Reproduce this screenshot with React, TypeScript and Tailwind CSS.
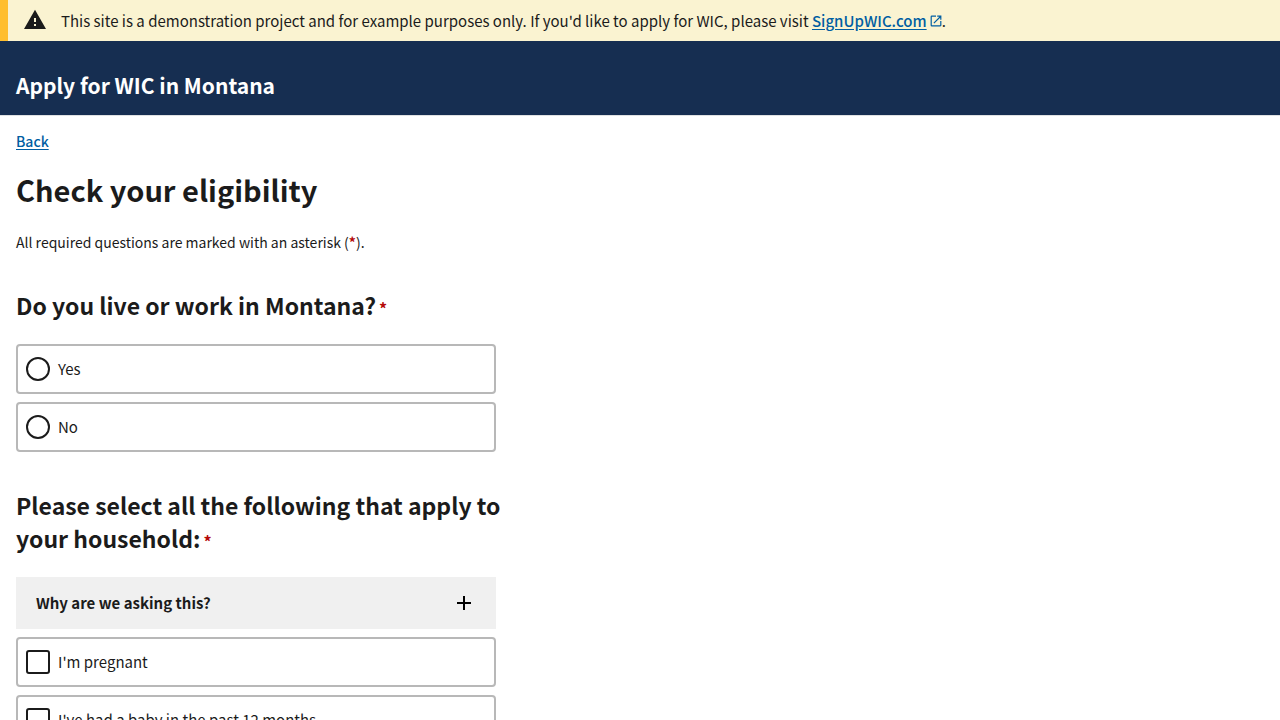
import { useState } from "react";

function Required({ className = "" }: { className?: string }) {
  return (
    <abbr title="required" className={`leading-none font-bold text-[#b50909] no-underline ${className}`}>
      *
    </abbr>
  );
}

type ChoiceProps = { type: "radio" | "checkbox"; name: string; label: string };

function Choice({ type, name, label }: ChoiceProps) {
  const shape = type === "radio" ? "rounded-full checked:bg-[#005ea2]" : "rounded-[3px] checked:bg-[#005ea2]";
  return (
    <label className="flex h-[50px] items-center gap-2 rounded border-2 border-[#b8b8b8] bg-white px-2 text-[15px] leading-5">
      <input
        type={type}
        name={name}
        className={`size-6 shrink-0 appearance-none border-2 border-[#1b1b1b] bg-white ${shape}`}
      />
      {label}
    </label>
  );
}

export default function App() {
  const [open, setOpen] = useState(false);
  return (
    <div className="bg-white font-['Noto_Sans_CJK_SC',sans-serif] text-[15px] text-[#1b1b1b]">
      <section
        aria-label="Site notice"
        className="flex items-center gap-[15px] border-l-8 border-[#ffbe2e] bg-[#faf3d1] px-4 py-2"
      >
        <svg viewBox="0 0 24 24" className="-mt-1 size-[22px] shrink-0" fill="currentColor" aria-hidden="true">
          <path d="M0 23h24L12 2 0 23zm13.1-3.3h-2.2v-2.2h2.2v2.2zm0-4.4h-2.2v-4.4h2.2v4.4z" />
        </svg>
        <p className="leading-[25px]">
          This site is a demonstration project and for example purposes only. If you'd like to apply for WIC, please
          visit{" "}
          <a href="#signup" className="font-medium text-[#005ea2] underline underline-offset-2">
            SignUpWIC.com
          </a>
          <svg viewBox="2 2 20 20" className="ml-[3px] inline size-3 align-baseline text-[#005ea2]" fill="currentColor" aria-hidden="true">
            <path d="M19 19H5V5h7V3H5a2 2 0 0 0-2 2v14a2 2 0 0 0 2 2h14c1.1 0 2-.9 2-2v-7h-2v7zM14 3v2h3.59l-9.83 9.83 1.41 1.41L19 6.41V10h2V3h-7z" />
          </svg>
          .
        </p>
      </section>
      <header className="border-b border-[#dfe1e2] bg-[#162e51] px-4 pt-8 pb-[18px] text-white">
        <p className="text-[21px] leading-6 font-bold">Apply for WIC in Montana</p>
      </header>
      <main className="px-4 pt-4 pb-8">
        <a href="#back" className="block w-fit text-sm leading-[18px] font-medium text-[#005ea2] underline underline-offset-2">
          Back
        </a>
        <h1 className="mt-5 text-[29px] leading-[38px] font-bold">Check your eligibility</h1>
        <p className="mt-6 text-sm leading-5">
          All required questions are marked with an asterisk (<Required />).
        </p>
        <form className="max-w-[480px]">
          <fieldset className="mt-[37px]">
            <legend className="-mr-2 text-[23px] leading-[33px] font-bold">
              Do you live or work in Montana?
              <Required className="ml-[3px] text-base" />
            </legend>
            <div className="mt-[22px] flex flex-col gap-2">
              <Choice type="radio" name="residency" label="Yes" />
              <Choice type="radio" name="residency" label="No" />
            </div>
          </fieldset>
          <fieldset className="mt-[37px]">
            <legend className="-mr-2 text-[23px] leading-[33px] font-bold">
              Please select all the following that apply to your household:
              <Required className="ml-[3px] text-base" />
            </legend>
            <div className="mt-[22px] flex flex-col gap-2">
              <div>
                <button
                  type="button"
                  aria-expanded={open}
                  onClick={() => setOpen(!open)}
                  className="flex h-[52px] w-full items-center justify-between bg-[#f0f0f0] px-5 font-bold"
                >
                  Why are we asking this?
                  <svg viewBox="0 0 24 24" className="size-6 text-black" fill="currentColor" aria-hidden="true">
                    <path d="M19 13h-6v6h-2v-6H5v-2h6V5h2v6h6v2z" />
                  </svg>
                </button>
              </div>
              <Choice type="checkbox" name="pregnant" label="I'm pregnant" />
              <Choice type="checkbox" name="baby" label="I've had a baby in the past 12 months" />
            </div>
          </fieldset>
        </form>
      </main>
    </div>
  );
}
